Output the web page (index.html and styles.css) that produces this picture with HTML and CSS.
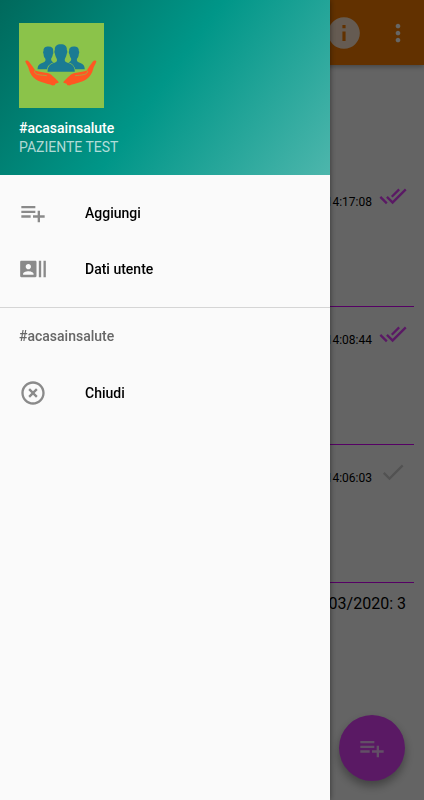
FILE: index.html
```html
<!DOCTYPE html>
<html lang="it">
<head>
<meta charset="utf-8">
<meta name="viewport" content="width=device-width, initial-scale=1">
<title>#acasainsalute</title>
<link rel="stylesheet" href="styles.css">
</head>
<body>
<svg class="sprite" aria-hidden="true">
  <symbol id="playlist-add" viewBox="0 0 24 24"><path d="M14 10H2v2h12v-2zm0-4H2v2h12V6zm4 8v-4h-2v4h-4v2h4v4h2v-4h4v-2h-4zM2 16h8v-2H2v2z"/></symbol>
  <symbol id="done-all" viewBox="0 0 24 24"><path d="M18 7l-1.41-1.41-6.34 6.34 1.41 1.41L18 7zm4.24-1.41L11.66 16.17 7.48 12l-1.41 1.41L11.66 19l12-12-1.42-1.41zM.41 13.41L6 19l1.41-1.41L1.83 12 .41 13.41z"/></symbol>
</svg>

<div class="page">
  <header class="appbar">
    <button class="appbar-button info" type="button" aria-label="Info">
      <svg class="icon-large" viewBox="0 0 24 24"><path d="M12 2C6.48 2 2 6.48 2 12s4.48 10 10 10 10-4.48 10-10S17.52 2 12 2zm1 15h-2v-6h2v6zm0-8h-2V7h2v2z"/></svg>
    </button>
    <button class="appbar-button" type="button" aria-label="Menu">
      <svg class="icon" viewBox="0 0 24 24"><path d="M12 8c1.1 0 2-.9 2-2s-.9-2-2-2-2 .9-2 2 .9 2 2 2zm0 2c-1.1 0-2 .9-2 2s.9 2 2 2 2-.9 2-2-.9-2-2-2zm0 6c-1.1 0-2 .9-2 2s.9 2 2 2 2-.9 2-2-.9-2-2-2z"/></svg>
    </button>
  </header>
  <main class="content">
    <ul class="entries">
      <li class="entry"><time>14:17:08</time><svg class="icon sent"><use href="#done-all"/></svg></li>
      <li class="entry"><time>14:08:44</time><svg class="icon sent"><use href="#done-all"/></svg></li>
      <li class="entry"><time>14:06:03</time><svg class="icon pending" viewBox="0 0 24 24"><path d="M9 16.2L4.8 12l-1.4 1.4L9 19 21 7l-1.4-1.4L9 16.2z"/></svg></li>
    </ul>
    <p class="summary">03/2020: 3</p>
  </main>
  <button class="fab" type="button" aria-label="Aggiungi"><svg class="icon"><use href="#playlist-add"/></svg></button>
</div>

<div class="scrim"></div>

<aside class="drawer">
  <header class="drawer-header">
    <svg class="logo" viewBox="0 0 256 256" role="img" aria-label="#acasainsalute">
      <rect width="256" height="256" fill="#8bc34a"/>
      <g fill="#1b7b93">
        <path d="M56 139C56 127 63 122 73 119C80 117 81 112 79 107C75 102 74 97 74 93C72 89 72 86 74 84C73 75 79 71 89 71C99 71 104 76 103 84C105 87 104 90 102 94C101 99 100 103 97 107C96 113 98 116 105 119L110 139Z"/>
        <path d="M198 139C198 127 191 122 181 119C174 117 173 112 175 107C179 102 180 97 180 93C182 89 182 86 180 84C181 75 175 71 165 71C155 71 150 76 151 84C149 87 150 90 152 94C153 99 154 103 157 107C158 113 156 116 149 119L144 139Z"/>
        <path stroke="#8bc34a" stroke-width="5" paint-order="stroke" d="M86 147C86 131 93 124 107 120C115 117 116 112 113 106C110 101 109 97 108 92C106 88 106 84 108 81C107 70 114 64 126 64C138 64 145 70 144 81C146 84 146 88 144 92C143 97 142 101 139 106C136 112 138 117 146 120C161 124 168 131 168 147Z"/>
      </g>
      <g fill="#ff5722">
        <path d="M19 116C20 111 27 112 30 117C37 126 43 134 49 143C58 146 68 148 80 150C93 151 98 157 107 165C113 170 117 175 120 179L108 184L109 187L101 188C83 182 60 178 49 169C39 161 33 151 30 140C28 131 22 124 19 116Z"/>
        <path d="M233 116C232 111 225 112 222 117C215 126 210 134 204 143C195 146 185 148 173 150C160 151 155 157 146 165C140 170 136 175 133 179L145 184L144 187L152 188C170 182 193 178 204 169C214 161 220 151 223 140C225 131 231 124 233 116Z"/>
      </g>
      <g fill="none" stroke="#8bc34a" stroke-width="2">
        <path d="M49 143C43 145 48 153 56 155C67 158 76 157 84 159"/>
        <path d="M204 143C210 145 205 153 197 155C186 158 177 157 169 159"/>
      </g>
    </svg>
    <div class="account">
      <strong class="account-name">#acasainsalute</strong>
      <span class="account-user">PAZIENTE TEST</span>
    </div>
  </header>
  <nav>
    <div class="group">
      <a class="item" href="#"><svg class="icon"><use href="#playlist-add"/></svg>Aggiungi</a>
      <a class="item" href="#"><svg class="icon" viewBox="0 0 24 24"><path d="M21 5v14h2V5h-2zm-4 14h2V5h-2v14zM14 5H2c-.55 0-1 .45-1 1v12c0 .55.45 1 1 1h12c.55 0 1-.45 1-1V6c0-.55-.45-1-1-1zM8 7.75c1.24 0 2.25 1.01 2.25 2.25S9.24 12.25 8 12.25 5.75 11.24 5.75 10 6.76 7.75 8 7.75zM12.5 17h-9v-.75c0-1.5 3-2.25 4.5-2.25s4.5.75 4.5 2.25V17z"/></svg>Dati utente</a>
    </div>
    <div class="group-bottom">
      <h2 class="subheader">#acasainsalute</h2>
      <a class="item" href="#"><svg class="icon" viewBox="0 0 24 24"><path d="M14.59 8L12 10.59 9.41 8 8 9.41 10.59 12 8 14.59 9.41 16 12 13.41 14.59 16 16 14.59 13.41 12 16 9.41 14.59 8zM12 2C6.47 2 2 6.47 2 12s4.47 10 10 10 10-4.47 10-10S17.53 2 12 2zm0 18c-4.41 0-8-3.59-8-8s3.59-8 8-8 8 3.59 8 8-3.59 8-8 8z"/></svg>Chiudi</a>
    </div>
  </nav>
</aside>
</body>
</html>
```
FILE: styles.css
```css
* {
  box-sizing: border-box;
}

body {
  margin: 0;
  background: #fafafa;
  color: #000;
  font-family: Roboto, "Liberation Sans", sans-serif;
  font-size: 14px;
}

button {
  padding: 0;
  border: 0;
  font: inherit;
}

svg {
  display: block;
  flex: none;
  fill: currentColor;
}

.sprite {
  position: absolute;
  width: 0;
  height: 0;
}

.icon {
  width: 28px;
  height: 28px;
}

.icon-large {
  width: 38px;
  height: 38px;
}

.page {
  min-height: 100vh;
}

.appbar {
  display: flex;
  align-items: center;
  justify-content: flex-end;
  gap: 21px;
  height: 65px;
  padding-right: 12px;
  background: #f57c00;
  box-shadow: 0 2px 5px rgba(0, 0, 0, 0.3);
}

.appbar-button {
  background: none;
  color: #fff;
}

.info {
  opacity: 0.8;
}

.content {
  padding: 104px 10px 0;
}

.entries {
  margin: 0;
  padding: 0;
  list-style: none;
}

.entry {
  display: flex;
  align-items: flex-start;
  justify-content: flex-end;
  gap: 7px;
  height: 138px;
  padding: 13px 7px 0 0;
  border-bottom: 1px solid #d500f9;
  font-size: 12px;
}

.entry time {
  padding-top: 10px;
  line-height: 20px;
}

.sent {
  color: #e040fb;
}

.pending {
  color: #ccc;
}

.summary {
  margin: 0;
  padding: 10px 8px;
  font-size: 16px;
  line-height: 22px;
  text-align: right;
}

.fab {
  position: fixed;
  right: 19px;
  bottom: 19px;
  display: grid;
  place-items: center;
  width: 66px;
  height: 66px;
  border-radius: 50%;
  background: #e040fb;
  color: rgba(255, 255, 255, 0.7);
  box-shadow: 0 5px 10px rgba(0, 0, 0, 0.35);
}

.scrim {
  position: fixed;
  inset: 0;
  background: rgba(0, 0, 0, 0.6);
}

.drawer {
  position: fixed;
  top: 0;
  bottom: 0;
  left: 0;
  width: 330px;
  max-width: 85vw;
  overflow-y: auto;
  background: #fafafa;
  box-shadow: 0 0 6px rgba(0, 0, 0, 0.5);
}

.drawer-header {
  padding: 23px 19px 18px;
  background: linear-gradient(126deg, #00695c, #009688 49%, #4db6ac);
  color: #fff;
}

.logo {
  width: 85px;
  height: 85px;
}

.account {
  display: flex;
  flex-direction: column;
  margin-top: 11px;
  line-height: 19px;
}

.account-name {
  font-weight: 500;
}

.account-user {
  color: rgba(255, 255, 255, 0.7);
}

.group {
  padding: 10px 0;
}

.group-bottom {
  border-top: 1px solid #d5d5d5;
}

.item {
  display: flex;
  align-items: center;
  gap: 38px;
  height: 56px;
  padding: 0 19px;
  color: #000;
  font-weight: 500;
  text-decoration: none;
}

.item .icon {
  color: #8a8a8a;
}

.subheader {
  margin: 0;
  padding: 0 19px;
  color: #666;
  font-size: 14px;
  font-weight: 500;
  line-height: 57px;
}
```
